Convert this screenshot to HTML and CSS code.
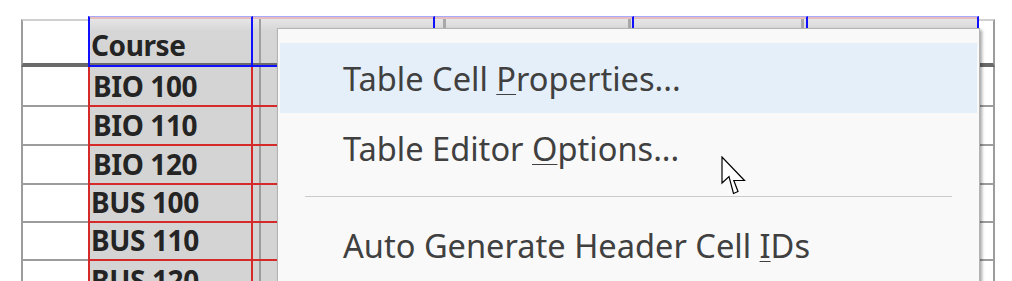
FILE: index.html
```html
<!DOCTYPE html>
<html lang="en">
<head>
    <meta charset="utf-8">
    <meta name="viewport" content="width=device-width, initial-scale=1">
    <link rel="stylesheet" href="styles.css">
</head>

<body>
    <!-- table being edited -->
    <div class="sheet">
        <div class="stub top"></div>
        <div class="sel top c1"><span class="txt">Course</span></div>
        <div class="sel top c2"></div>
        <div class="sel top c3"></div>
        <div class="sel top c4"></div>
        <div class="sel top c5"></div>
        <div class="end top"></div>

        <div class="stub"></div>
        <div class="sel c1"><span class="txt bio">BIO 100</span></div>
        <div class="sel c2"></div>
        <div class="sel c3"></div>
        <div class="sel c4"></div>
        <div class="sel c5"></div>
        <div class="end"></div>

        <div class="stub"></div>
        <div class="sel c1"><span class="txt bio">BIO 110</span></div>
        <div class="sel c2"></div>
        <div class="sel c3"></div>
        <div class="sel c4"></div>
        <div class="sel c5"></div>
        <div class="end"></div>

        <div class="stub"></div>
        <div class="sel c1"><span class="txt bio">BIO 120</span></div>
        <div class="sel c2"></div>
        <div class="sel c3"></div>
        <div class="sel c4"></div>
        <div class="sel c5"></div>
        <div class="end"></div>

        <div class="stub"></div>
        <div class="sel c1"><span class="txt">BUS 100</span></div>
        <div class="sel c2"></div>
        <div class="sel c3"></div>
        <div class="sel c4"></div>
        <div class="sel c5"></div>
        <div class="end"></div>

        <div class="stub"></div>
        <div class="sel c1"><span class="txt">BUS 110</span></div>
        <div class="sel c2"></div>
        <div class="sel c3"></div>
        <div class="sel c4"></div>
        <div class="sel c5"></div>
        <div class="end"></div>

        <div class="stub"></div>
        <div class="sel c1"><span class="txt">BUS 120</span></div>
        <div class="sel c2"></div>
        <div class="sel c3"></div>
        <div class="sel c4"></div>
        <div class="sel c5"></div>
        <div class="end"></div>
    </div>

    <!-- context menu -->
    <div class="menu">
        <div class="item hot">Table Cell <u>P</u>roperties...</div>
        <div class="item">Table Editor <u>O</u>ptions...</div>
        <div class="sep"></div>
        <div class="item">Auto Generate Header Cell <u>I</u>Ds</div>
    </div>

    <svg class="cursor" width="26" height="40" viewBox="0 0 26 40">
        <path d="M1 1 V27 L8 20.5 L12.5 37.5 L17 35.5 L12.8 24.5 H23.5 Z" fill="#fff" stroke="#000" stroke-width="1.2" stroke-linejoin="miter"/>
    </svg>
</body>
</html>
```

FILE: styles.css
```css
body {
    margin: 0;
    background: #fff;
    overflow: hidden;
    font-family: "Noto Sans", "Open Sans", sans-serif;
}

.sheet {
    display: grid;
    grid-template-columns: 67px 165px 182px 199px 174px 171px 16px;
    grid-template-rows: 51px 40px 39px 39px 38px 38px 40px;
    width: 974px;
    margin: 16px 0 0 21px;
}

.sheet > div {
    box-sizing: border-box;
}

/* plain table cells outside the selection */
.stub {
    background: #fff;
    border-left: 2px solid #9c9c9c;
    border-bottom: 2px solid #9c9c9c;
}

.end {
    background: #fff;
    border-right: 2px solid #9c9c9c;
    border-bottom: 2px solid #9c9c9c;
}

.stub.top, .end.top {
    margin-top: 3px;
    border-top: 2px solid #d0d0d0;
    border-bottom: 4px solid #6a6a6a;
}

/* selected cells */
.sel {
    display: flex;
    align-items: flex-end;
    background-color: #d4d4d4;
    border-right: 2px solid #d62a2a;
    border-bottom: 2px solid #d62a2a;
}

.sel.c1 {
    border-left: 2px solid #d62a2a;
}

.sel.top {
    background: linear-gradient(#e8e8e8, #d6d6d6 14px, #d4d4d4);
    border-top: 1px solid #a8a8ff;
    border-right-color: #1010ff;
    border-bottom: 2px solid #1010ff;
    box-shadow: inset 0 2px 0 #e6bcbc, inset 0 -2px 0 #6a6a6a;
}

.sel.top.c1 {
    border-left-color: #1010ff;
}

/* grid lines of the table underneath the selection */
.sel.c2 {
    background-image: linear-gradient(to right, transparent 6px, #9c9c9c 6px, #9c9c9c 8px, transparent 8px);
}

.sel.top.c2 {
    background-image: linear-gradient(to right, transparent 6px, #a0a0a0 6px, #a0a0a0 8px, transparent 8px), linear-gradient(#e8e8e8, #d6d6d6 14px, #d4d4d4);
}

.sel.top.c3 {
    background-image: linear-gradient(to right, transparent 8px, #a8a8a8 8px, #a8a8a8 11px, transparent 11px, transparent 193px, #a8a8a8 193px, #a8a8a8 196px, transparent 196px), linear-gradient(#e8e8e8, #d6d6d6 14px, #d4d4d4);
}

.sel.top.c4 {
    background-image: linear-gradient(to right, transparent 167px, #a8a8a8 167px, #a8a8a8 170px, transparent 170px), linear-gradient(#e8e8e8, #d6d6d6 14px, #d4d4d4);
}

.txt {
    font-weight: bold;
    font-size: 28px;
    line-height: 28px;
    letter-spacing: -0.4px;
    color: #242424;
    padding: 0 0 5px 1px;
    white-space: nowrap;
}

.txt.bio {
    padding-left: 3px;
}

.sel.top .txt {
    padding-bottom: 6px;
}

/* context menu */
.menu {
    position: absolute;
    left: 277px;
    top: 28px;
    width: 703px;
    height: 270px;
    box-sizing: border-box;
    padding: 14px 2px;
    background: #f9f9f9;
    border: 1px solid #b4b4b4;
    box-shadow: 2px 2px 3px rgba(0, 0, 0, 0.35);
    font-size: 32.6px;
    color: #404040;
}

.item {
    height: 70px;
    line-height: 72px;
    padding-left: 63px;
    white-space: nowrap;
}

.item u {
    text-decoration-thickness: 1px;
    text-underline-offset: 3px;
}

.item.hot {
    background: #e5eff9;
}

.sep {
    height: 1px;
    margin: 13px 25px 13px;
    background: #cacaca;
}

.cursor {
    position: absolute;
    left: 721px;
    top: 156px;
}
```
